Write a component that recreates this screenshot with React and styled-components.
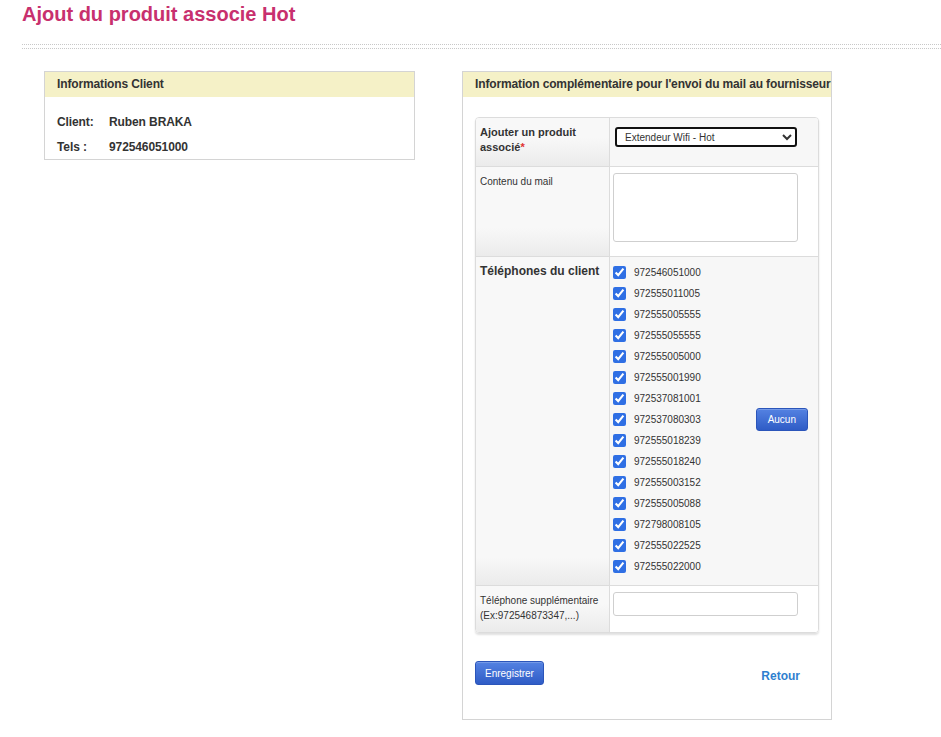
import React from "react";
import styled, { createGlobalStyle } from "styled-components";

const Global = createGlobalStyle`
  html, body { margin: 0; padding: 0; background: #fff; }
  body { font-family: "Liberation Sans", Arial, sans-serif; color: #333; }
  * { box-sizing: border-box; }
`;

const Page = styled.div`
  width: 941px;
  min-height: 737px;
  padding-top: 3px;
`;

const Title = styled.h1`
  margin: 0 0 0 22px;
  font-size: 20px;
  line-height: 23px;
  font-weight: bold;
  color: #c8306e;
`;

const Separator = styled.div`
  margin: 18px 0 0 22px;
  height: 5px;
  border-top: 1px dotted #c8c8c8;
  border-bottom: 1px dotted #c8c8c8;
`;

const Columns = styled.div`
  display: flex;
  align-items: flex-start;
  gap: 47px;
  margin: 22px 0 0 44px;
`;

const Panel = styled.section`
  width: ${(p) => p.$w}px;
  border: 1px solid #d4d4d4;
  background: #fff;
`;

const PanelHeader = styled.div`
  height: 25px;
  line-height: 25px;
  padding-left: 12px;
  background: #f5f1c7;
  font-size: 12px;
  font-weight: bold;
  letter-spacing: -0.14px;
  color: #333;
  white-space: nowrap;
  overflow: hidden;
`;

const InfoBody = styled.div`
  padding: 12px 12px 0;
`;

const InfoRow = styled.div`
  display: grid;
  grid-template-columns: 52px 1fr;
  height: 25px;
  align-items: center;
  font-size: 12px;
  font-weight: bold;
  letter-spacing: -0.1px;
  color: #333;
`;

const PanelBody = styled.div`
  padding: 20px 12px 34px;
`;

const FormTable = styled.div`
  display: grid;
  grid-template-columns: 134px 1fr;
  border: 1px solid #dcdcdc;
  border-radius: 4px;
  overflow: hidden;
  box-shadow: 0 2px 2px rgba(0, 0, 0, 0.12);
`;

const LabelCell = styled.div`
  padding: 7px 2px 6px 4px;
  border-right: 1px solid #dcdcdc;
  border-top: ${(p) => (p.$first ? "none" : "1px solid #dcdcdc")};
  background: linear-gradient(to bottom, #f8f8f8 0%, #f8f8f8 calc(100% - 28px), #ebebeb 100%);
  font-size: ${(p) => p.$size || 10}px;
  line-height: 15px;
  font-weight: ${(p) => (p.$bold ? "bold" : "normal")};
  color: #333;
`;

const ValueCell = styled.div`
  padding: ${(p) => p.$pad || "7px 4px"};
  border-top: ${(p) => (p.$first ? "none" : "1px solid #dcdcdc")};
  background: ${(p) => (p.$shade ? "#f7f7f7" : "#fff")};
`;

const Req = styled.span`
  color: #e0312f;
`;

const Select = styled.select`
  width: 182px;
  height: 20px;
  margin: 1px 0 0 0;
  padding: 0 4px;
  font-family: "Liberation Sans", Arial, sans-serif;
  font-size: 10px;
  color: #333;
  border: 2px solid #111;
  border-radius: 3px;
  background: #fff;
  outline: none;
`;

const TextArea = styled.textarea`
  display: block;
  width: 185px;
  height: 69px;
  border: 1px solid #cfcfcf;
  border-radius: 3px;
  resize: none;
  font-family: "Liberation Sans", Arial, sans-serif;
`;

const TextInput = styled.input`
  display: block;
  width: 185px;
  height: 24px;
  border: 1px solid #cfcfcf;
  border-radius: 3px;
  font-family: "Liberation Sans", Arial, sans-serif;
`;

const PhonesCell = styled.div`
  display: flex;
  align-items: center;
  justify-content: space-between;
  padding: 5px 10px 8px 3px;
  border-top: 1px solid #dcdcdc;
  background: #f7f7f7;
`;

const PhoneList = styled.div`
  display: flex;
  flex-direction: column;
`;

const PhoneItem = styled.label`
  display: flex;
  align-items: center;
  gap: 8px;
  height: 21px;
  font-size: 10px;
  color: #333;
  input {
    width: 13px;
    height: 13px;
    margin: 0;
    accent-color: #2f6fe4;
  }
`;

const BlueButton = styled.button`
  height: ${(p) => p.$h}px;
  padding: 0 ${(p) => p.$px}px;
  font-family: "Liberation Sans", Arial, sans-serif;
  font-size: 10px;
  color: #fff;
  border: 1px solid #2b55ba;
  border-radius: 3px;
  background: linear-gradient(to bottom, #5482e2 0%, #2f5cc6 100%);
  box-shadow: inset 0 1px 0 rgba(255, 255, 255, 0.2);
  cursor: pointer;
`;

const Footer = styled.div`
  display: flex;
  justify-content: space-between;
  align-items: flex-start;
  margin-top: 28px;
`;

const BackLink = styled.a`
  margin: 8px 19px 0 0;
  font-size: 12px;
  font-weight: bold;
  color: #2f7fcf;
  text-decoration: none;
`;

const phones = [
  "972546051000",
  "972555011005",
  "972555005555",
  "972555055555",
  "972555005000",
  "972555001990",
  "972537081001",
  "972537080303",
  "972555018239",
  "972555018240",
  "972555003152",
  "972555005088",
  "972798008105",
  "972555022525",
  "972555022000",
];

export default function App() {
  return (
    <Page>
      <Global />
      <Title>Ajout du produit associe Hot</Title>
      <Separator />
      <Columns>
        <Panel $w={371}>
          <PanelHeader>Informations Client</PanelHeader>
          <InfoBody>
            <InfoRow>
              <span>Client:</span>
              <span>Ruben BRAKA</span>
            </InfoRow>
            <InfoRow>
              <span>Tels :</span>
              <span>972546051000</span>
            </InfoRow>
          </InfoBody>
        </Panel>
        <Panel $w={370}>
          <PanelHeader>Information complémentaire pour l'envoi du mail au fournisseur</PanelHeader>
          <PanelBody>
            <FormTable>
              <LabelCell $first $bold $size={11}>
                Ajouter un produit associé<Req>*</Req>
              </LabelCell>
              <ValueCell $first $shade $pad="8px 4px 19px 5px">
                <Select defaultValue="ext">
                  <option value="ext">Extendeur Wifi - Hot</option>
                </Select>
              </ValueCell>
              <LabelCell>Contenu du mail</LabelCell>
              <ValueCell $pad="6px 4px 14px 3px">
                <TextArea />
              </ValueCell>
              <LabelCell $bold $size={12}>Téléphones du client</LabelCell>
              <PhonesCell>
                <PhoneList>
                  {phones.map((p) => (
                    <PhoneItem key={p}>
                      <input type="checkbox" defaultChecked />
                      {p}
                    </PhoneItem>
                  ))}
                </PhoneList>
                <BlueButton $h={23} $px={11}>Aucun</BlueButton>
              </PhonesCell>
              <LabelCell>
                Téléphone supplémentaire (Ex:972546873347,...)
              </LabelCell>
              <ValueCell $pad="6px 4px 16px 3px">
                <TextInput type="text" />
              </ValueCell>
            </FormTable>
            <Footer>
              <BlueButton $h={24} $px={9}>Enregistrer</BlueButton>
              <BackLink href="#">Retour</BackLink>
            </Footer>
          </PanelBody>
        </Panel>
      </Columns>
    </Page>
  );
}
